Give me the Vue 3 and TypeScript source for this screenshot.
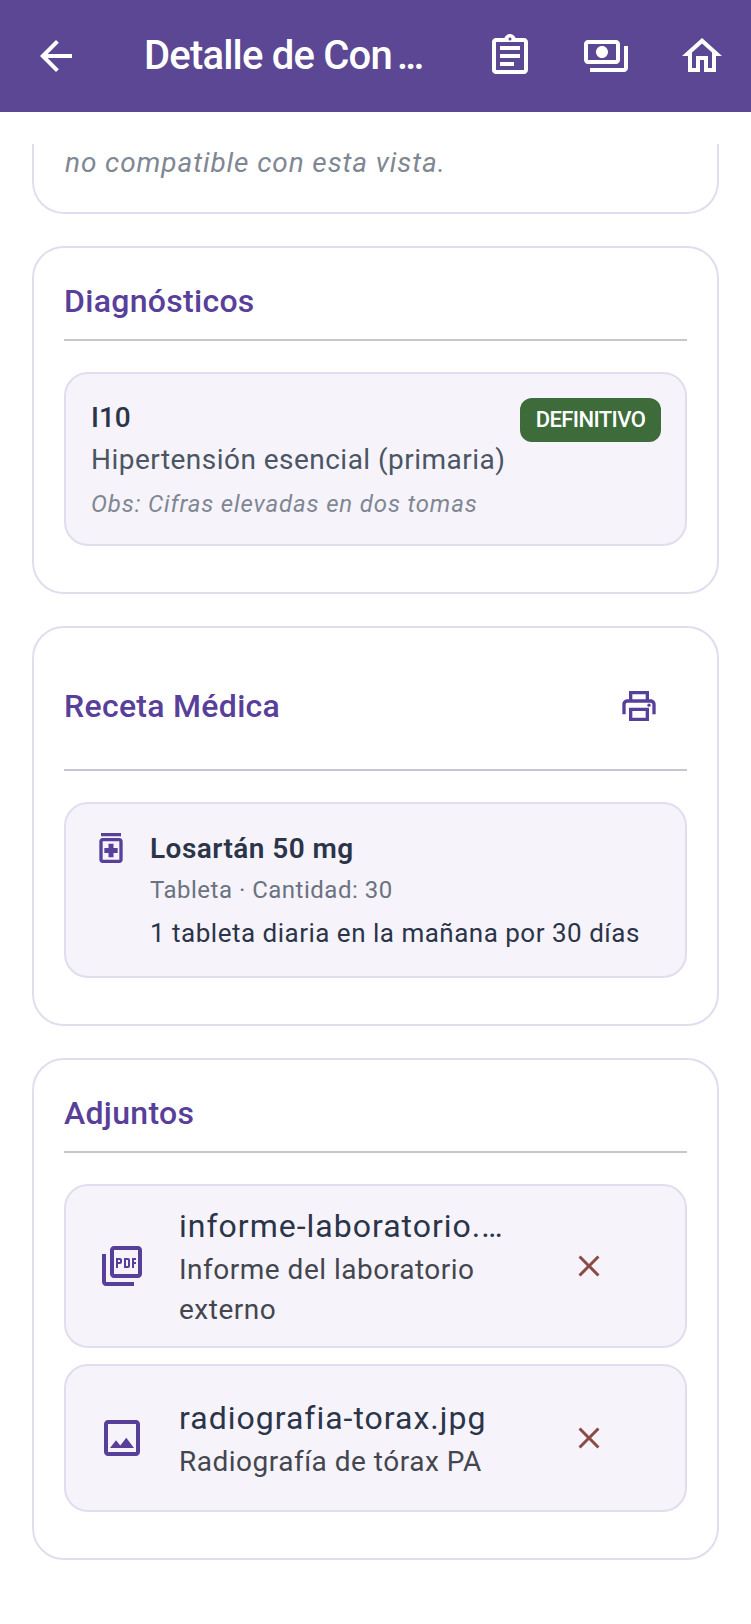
<script setup lang="ts">
interface Attachment {
  name: string;
  note: string;
  icon: 'pdf' | 'image';
}

const attachments: Attachment[] = [
  { name: 'informe-laboratorio.pdf', note: 'Informe del laboratorio externo', icon: 'pdf' },
  { name: 'radiografia-torax.jpg', note: 'Radiografía de tórax PA', icon: 'image' },
];

const pdfPath =
  'M20 2H8c-1.1 0-2 .9-2 2v12c0 1.1.9 2 2 2h12c1.1 0 2-.9 2-2V4c0-1.1-.9-2-2-2zm0 14H8V4h12v12zM4 6H2v14c0 1.1.9 2 2 2h14v-2H4V6zm12 6V9c0-.55-.45-1-1-1h-2v5h2c.55 0 1-.45 1-1zm-2-3h1v3h-1V9zm4 2h1v-1h-1V9h1V8h-2v5h1v-2zm-8 0h1c.55 0 1-.45 1-1V9c0-.55-.45-1-1-1H9v5h1v-2zm0-2h1v1h-1V9z';
const imagePath =
  'M19 5v14H5V5h14m0-2H5c-1.1 0-2 .9-2 2v14c0 1.1.9 2 2 2h14c1.1 0 2-.9 2-2V5c0-1.1-.9-2-2-2zm-4.86 8.86l-3 3.87L9 13.14 6 17h12l-3.86-5.14z';
</script>

<template>
  <div class="page">
    <header class="app-bar">
      <button class="bar-btn back" aria-label="Volver">
        <svg viewBox="0 0 24 24" width="48" height="48"><path d="M20 11H7.83l5.59-5.59L12 4l-8 8 8 8 1.41-1.41L7.83 13H20v-2z" /></svg>
      </button>
      <h1 class="bar-title">Detalle de Con<span class="dots">...</span></h1>
      <button class="bar-btn" aria-label="Historial">
        <svg viewBox="0 0 24 24" width="48" height="48"><path d="M7 15h7v2H7zm0-4h10v2H7zm0-4h10v2H7zm12-4h-4.18C14.4 1.84 13.3 1 12 1c-1.3 0-2.4.84-2.82 2H5c-.14 0-.27.01-.4.04-.39.08-.74.28-1.01.55-.18.18-.33.4-.43.64-.1.23-.16.49-.16.77v14c0 .27.06.54.16.78s.25.45.43.64c.27.27.62.47 1.01.55.13.02.26.03.4.03h14c1.1 0 2-.9 2-2V5c0-1.1-.9-2-2-2zm-7-.25c.41 0 .75.34.75.75s-.34.75-.75.75-.75-.34-.75-.75.34-.75.75-.75zM19 19H5V5h14v14z" /></svg>
      </button>
      <button class="bar-btn" aria-label="Pagos">
        <svg viewBox="0 0 24 24" width="48" height="48"><path d="M19 14V6c0-1.1-.9-2-2-2H3c-1.1 0-2 .9-2 2v8c0 1.1.9 2 2 2h14c1.1 0 2-.9 2-2zm-2 0H3V6h14v8zm-7-7c-1.66 0-3 1.34-3 3s1.34 3 3 3 3-1.34 3-3-1.34-3-3-3zm13 0v11c0 1.1-.9 2-2 2H4v-2h17V7h2z" /></svg>
      </button>
      <button class="bar-btn" aria-label="Inicio">
        <svg viewBox="0 0 24 24" width="48" height="48"><path d="M12 5.69l5 4.5V18h-2v-6H9v6H7v-7.81l5-4.5M12 3L2 12h3v8h6v-6h2v6h6v-8h3L12 3z" /></svg>
      </button>
    </header>

    <main class="content">
      <section class="card card-clipped">
        <p class="unsupported">no compatible con esta vista.</p>
      </section>

      <section class="card">
        <div class="card-head"><h2>Diagnósticos</h2></div>
        <div class="inner diagnosis">
          <div class="diagnosis-top">
            <div class="code">I10</div>
            <span class="badge">DEFINITIVO</span>
          </div>
          <div class="diagnosis-name">Hipertensión esencial (primaria)</div>
          <div class="diagnosis-obs">Obs: Cifras elevadas en dos tomas</div>
        </div>
      </section>

      <section class="card">
        <div class="card-head card-head-tall">
          <h2>Receta Médica</h2>
          <button class="print-btn" aria-label="Imprimir">
            <svg viewBox="0 0 24 24" width="40" height="40"><path d="M19 8h-1V3H6v5H5c-1.66 0-3 1.34-3 3v6h4v4h12v-4h4v-6c0-1.66-1.34-3-3-3zM8 5h8v3H8V5zm8 14H8v-4h8v4zm2-2v-4H6v4H4v-6c0-.55.45-1 1-1h14c.55 0 1 .45 1 1v6h-2z" /><circle cx="18" cy="11.5" r="1" /></svg>
          </button>
        </div>
        <div class="inner prescription">
          <svg class="med-icon" viewBox="0 0 24 24" width="40" height="40"><path d="M6 3h12v2H6zm11 3H7c-1.1 0-2 .9-2 2v11c0 1.1.9 2 2 2h10c1.1 0 2-.9 2-2V8c0-1.1-.9-2-2-2zm0 13H7V8h10v11zm-6.5-1.5h3V15H16v-3h-2.5V9.5h-3V12H8v3h2.5z" /></svg>
          <div>
            <div class="med-name">Losartán 50 mg</div>
            <div class="med-meta">Tableta · Cantidad: 30</div>
            <div class="med-dose">1 tableta diaria en la mañana por 30 días</div>
          </div>
        </div>
      </section>

      <section class="card">
        <div class="card-head"><h2>Adjuntos</h2></div>
        <div class="attachments">
          <div v-for="file in attachments" :key="file.name" class="inner attachment">
            <svg class="file-icon" viewBox="0 0 24 24" width="48" height="48"><path :d="file.icon === 'pdf' ? pdfPath : imagePath" /></svg>
            <div class="file-text">
              <div class="file-name">{{ file.name }}</div>
              <div class="file-note">{{ file.note }}</div>
            </div>
            <button class="remove-btn" aria-label="Eliminar">
              <svg viewBox="0 0 24 24" width="36" height="36"><path d="M19 6.41L17.59 5 12 10.59 6.41 5 5 6.41 10.59 12 5 17.59 6.41 19 12 13.41 17.59 19 19 17.59 13.41 12z" /></svg>
            </button>
          </div>
        </div>
      </section>
    </main>
  </div>
</template>

<style>
body {
  margin: 0;
  background: #fff;
}
</style>

<style scoped>
.page {
  min-height: 1624px;
  background: #fff;
  font-family: Roboto, "Noto Sans", sans-serif;
}

button {
  background: none;
  border: 0;
  padding: 0;
  display: flex;
  align-items: center;
  justify-content: center;
}

.app-bar {
  height: 112px;
  background: #5c4794;
  display: flex;
  align-items: center;
  padding-left: 8px;
}

.bar-btn {
  flex: 0 0 96px;
  height: 96px;
}

.bar-btn svg {
  fill: #fff;
}

.bar-title {
  width: 290px;
  margin: 0 28px 0 40px;
  color: #fff;
  font-size: 40px;
  font-weight: 500;
  line-height: 56px;
  letter-spacing: -0.8px;
  white-space: nowrap;
}

.dots {
  margin-left: 5px;
  letter-spacing: -2.8px;
}

.content {
  padding: 32px 32px 0;
  display: flex;
  flex-direction: column;
  gap: 32px;
}

.card {
  border: 2px solid #e0deee;
  border-radius: 32px;
  padding: 30px 30px 46px;
  background: #fff;
}

.card-clipped {
  border-top: 0;
  border-radius: 0 0 32px 32px;
  padding: 0 30px 0 31px;
  height: 68px;
}

.unsupported {
  margin: 0;
  color: #7f8793;
  font-size: 28px;
  font-style: italic;
  line-height: 38px;
  letter-spacing: 0.9px;
}

.card-head {
  min-height: 46px;
  display: flex;
  align-items: center;
  justify-content: space-between;
  padding-bottom: 15px;
  border-bottom: 2px solid #c9c4d0;
  margin-bottom: 31px;
}

.card-head-tall {
  min-height: 96px;
}

.card-head h2 {
  margin: 0;
  color: #58409a;
  font-size: 32px;
  font-weight: 500;
  line-height: 46px;
  letter-spacing: 0.3px;
}

.print-btn {
  width: 96px;
  height: 96px;
}

.print-btn svg,
.med-icon,
.file-icon {
  fill: #58409a;
}

.inner {
  border: 2px solid #e0deee;
  border-radius: 24px;
  background: #f6f4fa;
}

.diagnosis {
  padding: 24px 24px 22px 25px;
}

.diagnosis-top {
  display: flex;
  justify-content: space-between;
  align-items: flex-start;
  height: 40px;
}

.code {
  color: #2b3448;
  font-size: 28px;
  font-weight: 500;
  line-height: 40px;
}

.badge {
  width: 141px;
  height: 44px;
  border-radius: 12px;
  background: #3d6b3a;
  color: #fff;
  font-size: 22px;
  font-weight: 500;
  line-height: 44px;
  letter-spacing: -0.6px;
  text-align: center;
}

.diagnosis-name {
  margin-top: 2px;
  margin-bottom: -2px;
  color: #4b5563;
  font-size: 28px;
  line-height: 40px;
  letter-spacing: 0.47px;
}

.diagnosis-obs {
  margin-top: 8px;
  color: #7f8793;
  font-size: 24px;
  font-style: italic;
  line-height: 36px;
  letter-spacing: 0.85px;
}

.prescription {
  display: flex;
  gap: 19px;
  padding: 24px 24px 23px 25px;
}

.med-icon {
  flex: none;
}

.med-name {
  margin-top: 1px;
  margin-bottom: -1px;
  color: #2b3448;
  font-size: 28px;
  font-weight: 600;
  line-height: 40px;
  letter-spacing: 0.45px;
}

.med-meta {
  margin-top: 4px;
  margin-bottom: -1px;
  color: #6b7280;
  font-size: 24px;
  line-height: 36px;
  letter-spacing: 0.5px;
}

.med-dose {
  margin-top: 6px;
  color: #2b3448;
  font-size: 26px;
  line-height: 40px;
  letter-spacing: 0.5px;
}

.attachments {
  display: flex;
  flex-direction: column;
  gap: 16px;
}

.attachment {
  box-sizing: border-box;
  min-height: 148px;
  display: flex;
  align-items: center;
  padding: 16px 56px 16px 32px;
}

.file-icon {
  flex: none;
}

.file-text {
  width: 332px;
  margin-left: 33px;
  flex: none;
}

.file-name {
  color: #2b3448;
  font-size: 32px;
  line-height: 48px;
  letter-spacing: 1px;
  white-space: nowrap;
  overflow: hidden;
  text-overflow: ellipsis;
}

.file-note {
  color: #44464f;
  font-size: 28px;
  line-height: 40px;
  letter-spacing: 0.5px;
}

.remove-btn {
  width: 80px;
  height: 80px;
  margin-left: auto;
}

.remove-btn svg {
  fill: #8c4a44;
}
</style>
